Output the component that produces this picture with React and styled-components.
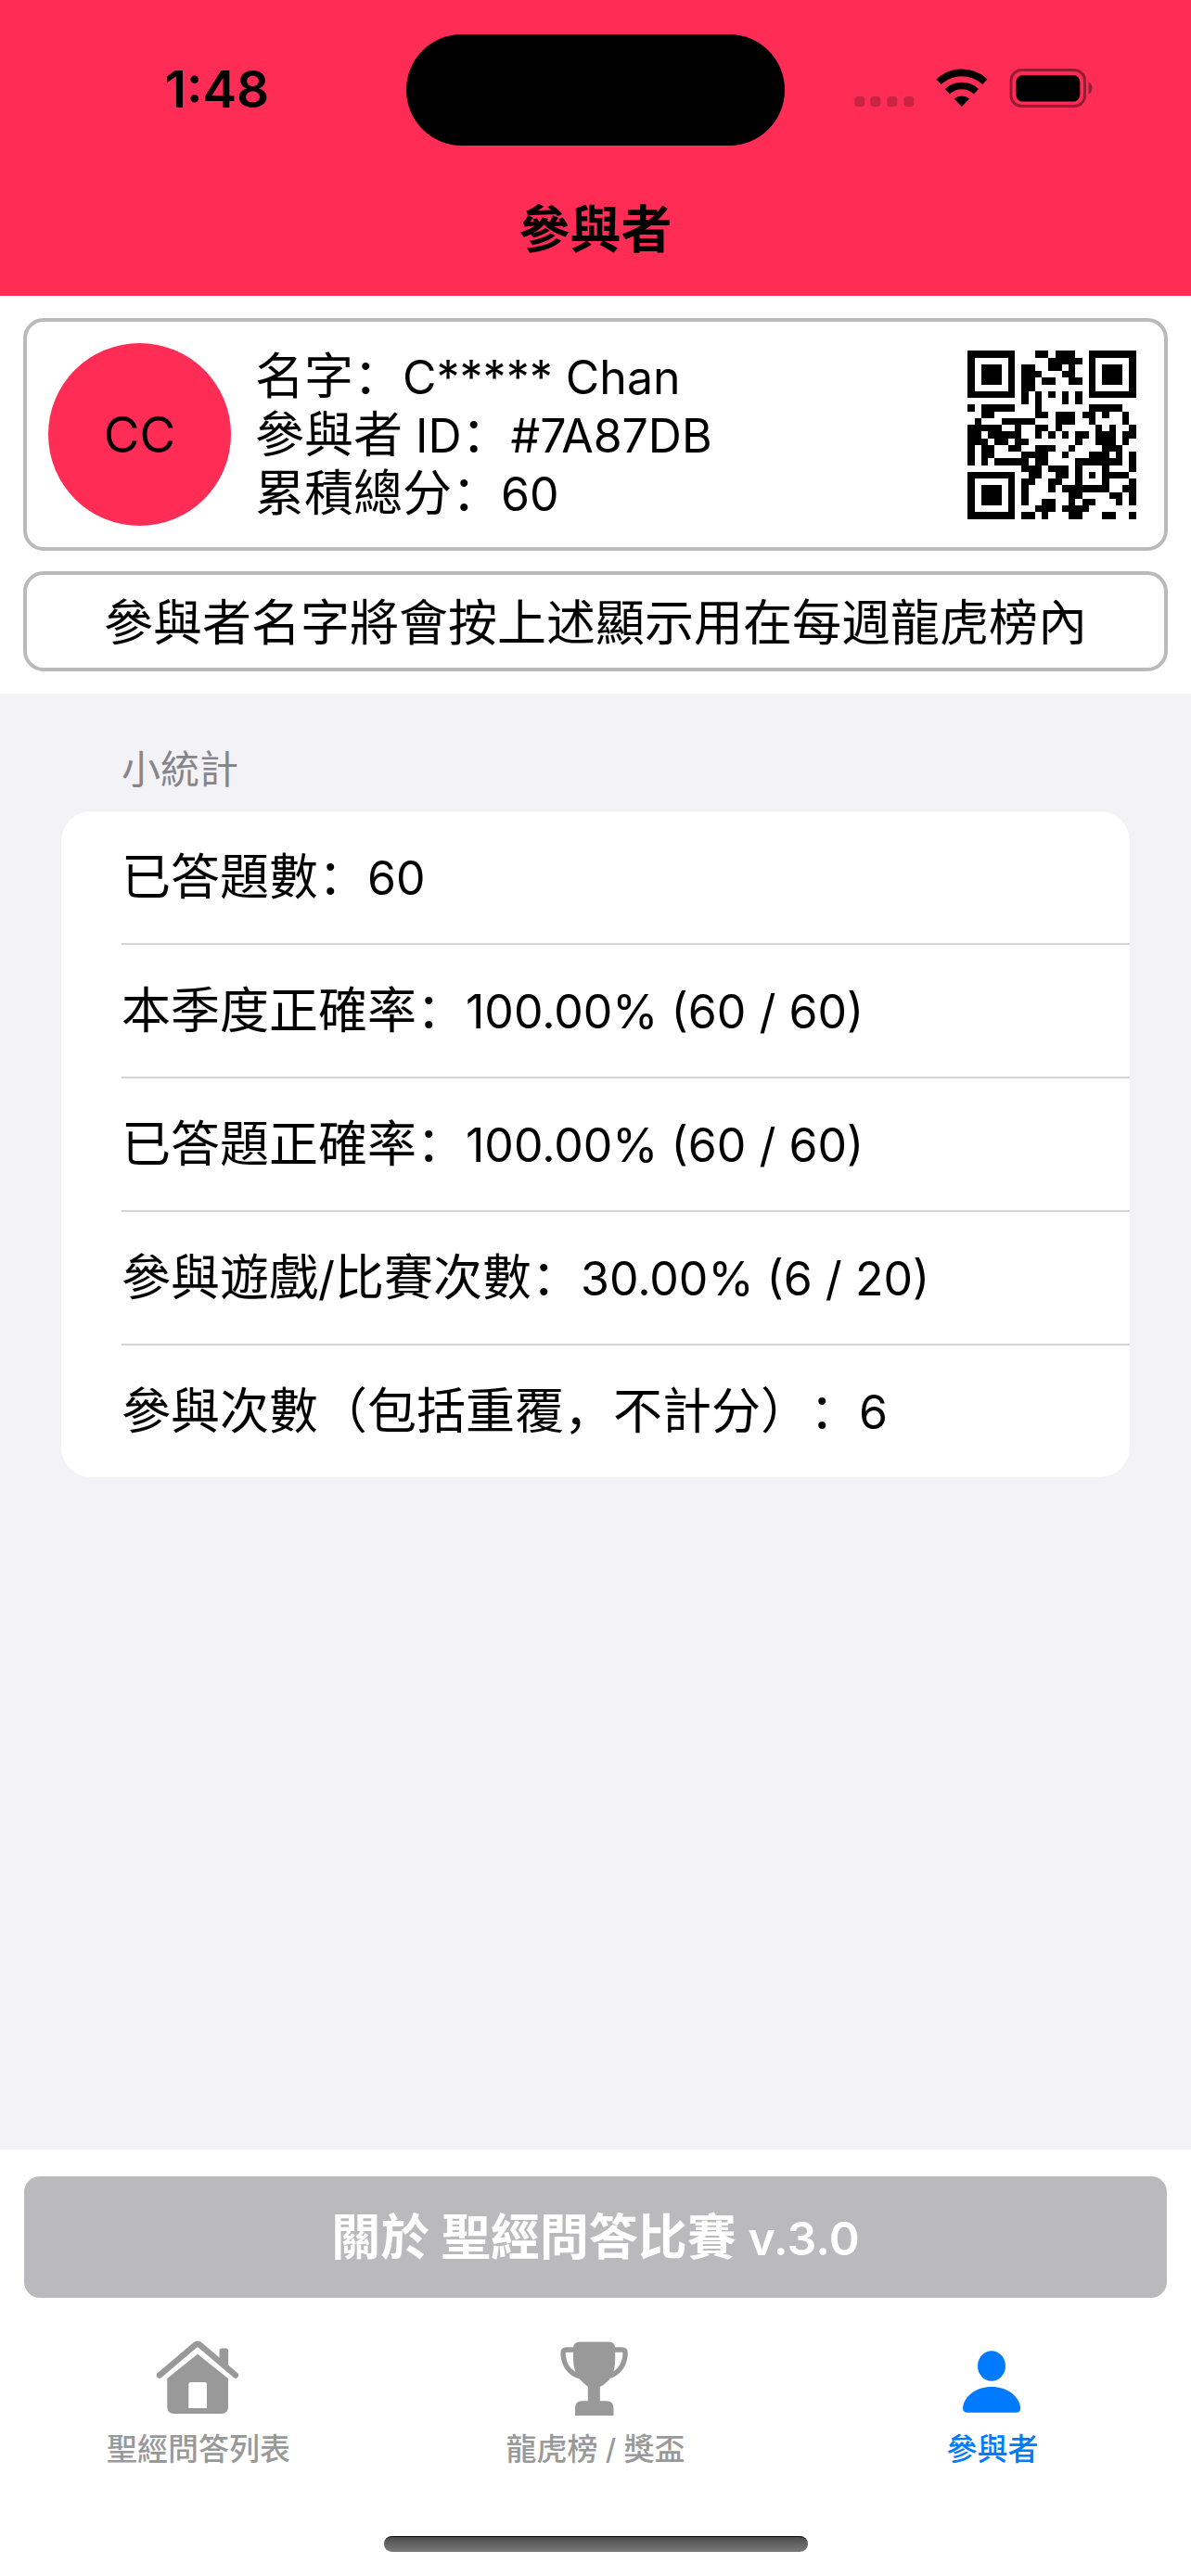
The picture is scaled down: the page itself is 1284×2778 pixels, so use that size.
import React from "react";
import styled, { createGlobalStyle } from "styled-components";

const GlobalStyle = createGlobalStyle`
  * {
    box-sizing: border-box;
  }

  body {
    margin: 0;
    background: white;
    color: black;
    font-family: "Noto Sans CJK SC", "Inter", sans-serif;
    font-size: 53px;
    text-spacing-trim: space-all;
  }
`;

const Page = styled.div`
  min-height: 100vh;
  display: flex;
  flex-direction: column;
`;

const Header = styled.header`
  background: #ff2d55;
  padding-top: 37px;
`;

const StatusBar = styled.div`
  display: grid;
  grid-template-columns: 1fr 408px 1fr;
  align-items: center;
`;

const Clock = styled.time`
  padding: 0 0 2px 30px;
  text-align: center;
  font-family: "Inter", sans-serif;
  font-size: 55px;
  font-weight: 600;
  line-height: 64px;
`;

const Island = styled.div`
  height: 120px;
  border-radius: 60px;
  background: black;
`;

const StatusIcons = styled.div`
  display: flex;
  justify-content: flex-end;
  padding: 0 106px 4px 0;
`;

const Title = styled.h1`
  margin: 0;
  padding: 46px 0 36px;
  text-align: center;
  font-size: 55px;
  font-weight: 700;
  line-height: 80px;
`;

const Profile = styled.section`
  display: flex;
  flex-direction: column;
  gap: 22px;
  padding: 24px 25px;
`;

const Card = styled.div`
  border: 4px solid #bababc;
  border-radius: 22px;
  background: white;
`;

const ProfileCard = styled(Card)`
  display: flex;
  align-items: center;
  gap: 26px;
  padding: 23px;
`;

const Avatar = styled.div`
  flex: none;
  display: grid;
  place-items: center;
  width: 197px;
  height: 197px;
  border-radius: 50%;
  background: #ff2d55;
  font-family: "Inter", sans-serif;
`;

const Details = styled.div`
  flex: 1;
  padding-bottom: 6px;
`;

const Line = styled.p`
  margin: 0;
  line-height: 63px;
`;

const Latin = styled.span`
  font-family: "Inter", sans-serif;
  font-size: 50px;
  line-height: 1;
`;

const Notice = styled(Card)`
  padding: 16px 23px 20px;
  line-height: 64px;
  text-align: center;
`;

const Stats = styled.section`
  flex: 1;
  padding: 49px 66px;
  background: #f2f2f7;
`;

const StatsHeading = styled.h2`
  margin: 0 0 18px;
  padding: 0 65px;
  color: #85858b;
  font-size: 42px;
  font-weight: 400;
  line-height: 60px;
`;

const StatsList = styled.ul`
  margin: 0;
  padding: 0 0 0 65px;
  border-radius: 32px;
  background: white;
  list-style: none;
`;

const StatsRow = styled.li`
  padding: 35px 0 43px;
  line-height: 64px;

  & + & {
    border-top: 2px solid #d4d4d6;
  }
`;

const Footer = styled.footer`
  padding: 29px 26px 26px;
`;

const AboutButton = styled.button`
  display: block;
  width: 100%;
  padding: 30px 0 36px;
  border: none;
  border-radius: 17px;
  background: #bababc;
  color: white;
  font-family: inherit;
  font-size: 53px;
  font-weight: 700;
  line-height: 65px;

  ${Latin} {
    font-weight: 600;
  }
`;

const TabBar = styled.nav`
  display: grid;
  grid-template-columns: repeat(3, 1fr);
  margin: 0 -26px;
  padding-top: 43px;
`;

const Tab = styled.a`
  display: flex;
  flex-direction: column;
  align-items: center;
  gap: 10px;
  color: ${(props) => (props.$active ? "#007aff" : "#999999")};
  font-size: 33px;
  font-weight: 500;
  line-height: 48px;
  text-decoration: none;

  ${Latin} {
    font-size: 31px;
  }
`;

const HomeIndicator = styled.div`
  width: 457px;
  height: 17px;
  margin: 72px auto 0;
  border-radius: 9px;
  border-top: 1px solid black;
  background: linear-gradient(#4c4c4c, #7a7a7a);
`;

// Latin letters and digits run slightly smaller than the Chinese glyphs
const Mixed = ({ children }) =>
  children
    .split(/([\x20-\x7e]+)/)
    .map((part, i) => (i % 2 ? <Latin key={i}>{part}</Latin> : part));

const SignalIcons = () => (
  <svg width="257" height="42" viewBox="0 0 257 42" aria-hidden="true">
    <g opacity="0.2">
      {[0, 17, 35, 53].map((x) => (
        <rect key={x} x={x + 0.3} y="30" width="11" height="11" rx="3.4" />
      ))}
    </g>
    <g fill="none" stroke="black" strokeWidth="7.6">
      <path d="M91 14.2a36.6 36.6 0 0 1 49.8 0" />
      <path d="M100.4 24.7a22.6 22.6 0 0 1 31 0" />
    </g>
    <path d="M115.9 41l-8.3-8.5a12.6 12.6 0 0 1 16.6 0z" />
    <rect x="169" y="1.5" width="79.5" height="39" rx="11.5" fill="none" stroke="black" strokeOpacity="0.4" strokeWidth="3" />
    <rect x="174.3" y="7" width="69" height="28.6" rx="7.5" />
    <path d="M252.5 14.5c5.4 2.2 5.4 11 0 13.2z" opacity="0.4" />
  </svg>
);

const HouseIcon = () => (
  <svg width="130" height="84" viewBox="-1 22 130 84" fill="currentColor" aria-hidden="true">
    <path
      d="M22 62.5L60.3 30q2.7-2.2 5.4 0L104 62.5"
      fill="none"
      stroke="currentColor"
      strokeWidth="6.4"
      strokeLinecap="round"
      strokeLinejoin="round"
    />
    <path d="M86.5 46V36q0-2.6 2.6-2.6h4.4q2.6 0 2.6 2.6v18z" />
    <path
      fillRule="evenodd"
      d="M30.3 66L63 39.7 96 66v30.5q0 7.5-7.5 7.5H37.8q-7.5 0-7.5-7.5zM55.5 70q-2.2 0-2.2 2.2V98H73V72.2q0-2.2-2.2-2.2z"
    />
  </svg>
);

const TrophyIcon = () => (
  <svg width="130" height="84" viewBox="-3 23 130 84" fill="currentColor" aria-hidden="true">
    <path d="M45 27.6h31.5q6.7 0 6.7 6.7V46q0 11-3.5 18-3 5.6-8.6 9.5L66.8 76v15.2h7.4q7.3 0 7.3 7.5v7.5q0 2-2 2H42q-2 0-2-2v-7.5q0-7.5 7.3-7.5h6.5V76l-7.5-6.8Q38 60 38 46V34.3q0-6.7 7-6.7z" />
    <path
      d="M39.5 36H30.5q-3.4 0-3.4 3.4C27.1 52 34 62 46.5 65.2M82 36h8.7q3.4 0 3.4 3.4C94.1 52 87 62 74.5 65.2"
      fill="none"
      stroke="currentColor"
      strokeWidth="5.4"
    />
  </svg>
);

const PersonIcon = () => (
  <svg width="120" height="84" viewBox="0 11 120 84" fill="currentColor" aria-hidden="true">
    <ellipse cx="59" cy="41.5" rx="15" ry="16.2" />
    <path d="M33 91.7q-5 0-5-4.7C28.8 74.5 42 64 59 64s30.3 10.5 31.2 23q0 4.7-5 4.7z" />
  </svg>
);

const qrRows = [
  "1111111000110111001111111",
  "1000001000001111101000001",
  "1011101011001101001011101",
  "1011101011100011001011101",
  "1011101011011001101011101",
  "1000001011000000001000001",
  "1111111010101010101111111",
  "0000000010100010100000000",
  "1011111000100000001111100",
  "0011000000110111011010010",
  "0100011111000111001000010",
  "1111100100110100000101001",
  "1101111100101010110111011",
  "1110110110000000100111010",
  "1011001100111001000011100",
  "1011000011110010001110101",
  "1010111110110000111111101",
  "0000000011101110100010001",
  "1111111001100110101011110",
  "1000001011001100100010001",
  "1011101010001011111110011",
  "1011101010000001100001101",
  "1011101010011001011000101",
  "1000001000111011110000000",
  "1111111011010001100011001",
];

const qrPath = qrRows
  .flatMap((row, y) => [...row].map((cell, x) => (cell === "1" ? `M${x} ${y}h1v1h-1z` : "")))
  .join("");

const QrCode = () => (
  <svg width="196" height="196" viewBox="-1 -1 27 27" shapeRendering="crispEdges" role="img" aria-label="QR">
    <path d={qrPath} />
  </svg>
);

const details = ["名字：C***** Chan", "參與者 ID：#7A87DB", "累積總分：60"];

const stats = [
  "已答題數：60",
  "本季度正確率：100.00% (60 / 60)",
  "已答題正確率：100.00% (60 / 60)",
  "參與遊戲/比賽次數：30.00% (6 / 20)",
  "參與次數（包括重覆，不計分）：6",
];

const tabs = [
  { label: "聖經問答列表", href: "#quizzes", Icon: HouseIcon },
  { label: "龍虎榜 / 獎盃", href: "#ranking", Icon: TrophyIcon },
  { label: "參與者", href: "#participant", Icon: PersonIcon, active: true },
];

const App = () => {
  return (
    <Page lang="zh-Hans">
      <GlobalStyle />

      <Header>
        <StatusBar>
          <Clock>1:48</Clock>
          <Island />
          <StatusIcons>
            <SignalIcons />
          </StatusIcons>
        </StatusBar>
        <Title>參與者</Title>
      </Header>

      <Profile>
        <ProfileCard>
          <Avatar>CC</Avatar>
          <Details>
            {details.map((text) => (
              <Line key={text}>
                <Mixed>{text}</Mixed>
              </Line>
            ))}
          </Details>
          <QrCode />
        </ProfileCard>
        <Notice>參與者名字將會按上述顯示用在每週龍虎榜內</Notice>
      </Profile>

      <Stats>
        <StatsHeading>小統計</StatsHeading>
        <StatsList>
          {stats.map((text) => (
            <StatsRow key={text}>
              <Mixed>{text}</Mixed>
            </StatsRow>
          ))}
        </StatsList>
      </Stats>

      <Footer>
        <AboutButton type="button">
          <Mixed>關於 聖經問答比賽 v.3.0</Mixed>
        </AboutButton>
        <TabBar>
          {tabs.map(({ label, href, Icon, active }) => (
            <Tab key={href} href={href} $active={active}>
              <Icon />
              <span>
                <Mixed>{label}</Mixed>
              </span>
            </Tab>
          ))}
        </TabBar>
        <HomeIndicator />
      </Footer>
    </Page>
  );
};

export default App;
